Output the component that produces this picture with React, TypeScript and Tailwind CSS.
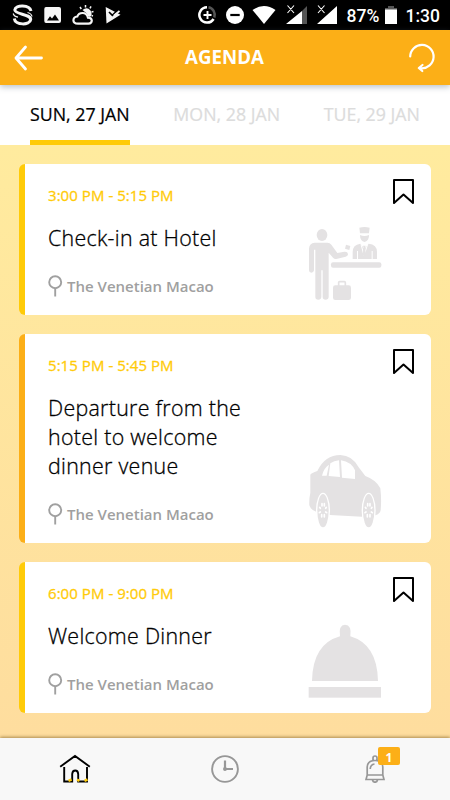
import type { ReactNode } from 'react';

interface AgendaItem {
  time: string;
  title: string;
  location: string;
  accent: string;
  art: ReactNode;
}

const TABS = ['SUN, 27 JAN', 'MON, 28 JAN', 'TUE, 29 JAN'];

function ReceptionArt() {
  return (
    <svg width="74" height="74" viewBox="54 33 222 222" fill="#e4e2e3">
      {/* Guest */}
      <ellipse cx="96" cy="60" rx="16" ry="18" />
      <path d="M74 83H112Q120 83 124 89L142 114L163 110Q173 109 174 117Q174 123 167 125L139 132Q133 133 129 128L116 113V246Q115 254 107 254Q98 254 98 246V166H94V246Q93 254 85 254Q76 254 76 246V104H72V166Q71 173 64 173Q57 173 57 166V101Q58 84 74 83Z" />
      <path d="M168 89L181 93L178 105L165 101Z" />
      {/* Receptionist */}
      <path d="M208 38Q223 34 239 38L237 55H210Z" />
      <path d="M210 60Q223 66 237 60Q238 76 224 81Q210 78 210 60Z" />
      <path d="M188 132V111Q188 89 211 86L223 101L236 86Q261 88 261 111V132H248V108H245V132H204V108H201V132Z" />
      <path d="M213 88L222 121L233 88" stroke="#fff" strokeWidth="3" fill="none" />
      <path d="M219 92H227L225 98L228 118L223 127L218 118L221 98Z" />
      <rect x="123" y="142" width="151" height="16" rx="6" />
      {/* Suitcase */}
      <rect x="129" y="211" width="54" height="44" rx="7" />
      <path d="M146 213V202Q146 200 149 200H163Q166 200 166 203V213" stroke="#e4e2e3" strokeWidth="5" fill="none" />
    </svg>
  );
}

function Wheel({ cx }: { cx: number }) {
  return (
    <g>
      <ellipse cx={cx} cy="212" rx="21" ry="54" fill="#fff" />
      <ellipse cx={cx} cy="212" rx="17" ry="50" />
      <g stroke="#fff" strokeWidth="5" strokeLinecap="round">
        <path d={`M${cx - 3} 191v7M${cx + 4} 191v7M${cx - 10} 202l2 3M${cx + 10} 202l-2 3`} />
        <path d={`M${cx - 11} 218l3-2M${cx + 11} 218l-3-2M${cx - 4} 231v-7M${cx + 4} 231v-7`} />
      </g>
    </g>
  );
}

function CarArt() {
  return (
    <svg width="74" height="74" viewBox="54 42 222 222" fill="#e4e2e3">
      <path d="M61 104Q64 99 82 93Q105 45 151 45Q187 46 206 82L226 108Q259 120 271 145Q275 179 272 211Q270 222 256 226L216 230L120 225L80 216Q63 211 58 196Q57 176 61 158Z" />
      <path d="M96 107Q101 84 117 74L110 107ZM121 70Q132 62 147 61L150 111L116 108ZM153 61Q184 66 195 91V117L156 113Z" fill="#fff" />
      <Wheel cx={99} />
      <Wheel cx={236} />
    </svg>
  );
}

function DinnerArt() {
  return (
    <svg width="74" height="74" viewBox="54 42 222 222" fill="#e4e2e3">
      <path d="M66 213Q68 102 150 79Q145 45 165 44Q186 45 181 79Q262 103 264 213Z" />
      <rect x="56" y="231" width="217" height="32" />
    </svg>
  );
}

const ITEMS: AgendaItem[] = [
  {
    time: '3:00 PM - 5:15 PM',
    title: 'Check-in at Hotel',
    location: 'The Venetian Macao',
    accent: 'border-[#ffcb08]',
    art: <ReceptionArt />,
  },
  {
    time: '5:15 PM - 5:45 PM',
    title: 'Departure from the hotel to welcome dinner venue',
    location: 'The Venetian Macao',
    accent: 'border-[#fcaf17]',
    art: <CarArt />,
  },
  {
    time: '6:00 PM - 9:00 PM',
    title: 'Welcome Dinner',
    location: 'The Venetian Macao',
    accent: 'border-[#ffcb08]',
    art: <DinnerArt />,
  },
];

function StatusBar() {
  return (
    <div className="flex h-[30px] items-center justify-between bg-black pr-[10px] pl-3 font-[Roboto,sans-serif] text-white">
      <svg width="112" height="30" viewBox="0 0 112 30" fill="none">
        <path d="M19 11C17.500 4.500 3.500 4.500 2.800 10C3 14.500 19 14 18.700 19.500C18 25.500 3 25.500 2.300 18.500" stroke="#f5f5f5" strokeWidth="3" />
        <path d="M1.200 13.500Q2 16.500 6 17.200M20 16.500Q19.500 13.500 15.500 12.500" stroke="#f5f5f5" strokeWidth="1.200" />
        <path fill="#f5f5f5" fillRule="evenodd" d="M34 7H47Q49 7 49 9V21Q49 23 47 23H34Q32.300 23 32.300 21V9Q32.300 7 34 7ZM35 20.500H47L43 14.500L40 18.500L38 16.300Z" />
        <path d="M66 23.700H76.500Q79.700 23.500 79.800 20.500Q79.500 17.700 76 17.700Q75 13 70.500 13Q66.500 13 65.300 16.500Q61.500 17 61.400 20.300Q61.500 23.700 66 23.700Z" stroke="#f5f5f5" strokeWidth="2.200" />
        <path d="M70.500 10Q75 6.500 78.500 10.500Q81 14.500 78 17L76 16Q74 12 70.500 10Z" fill="#f5f5f5" />
        <path d="M68 7l1.300 2M73.500 5v2.500M79 6.300l-1 2M81.500 11.500l-2 .5M81 16l-1.500-.5" stroke="#f5f5f5" strokeWidth="1.500" />
        <path fill="#f5f5f5" d="M93.700 7L108.500 14.800L94.500 23.500Z" />
        <path d="M97 12L100.300 15.300L106 9.800" stroke="#000" strokeWidth="1.700" />
        <path d="M102 15.500L107.500 11" stroke="#f5f5f5" strokeWidth="1.800" />
      </svg>
      <div className="flex items-center">
        <svg width="142" height="30" viewBox="197 0 142 30" fill="none">
          <path d="M207 7.200A7.700 7.700 0 1 0 213.600 19" stroke="#fff" strokeWidth="2.500" />
          <path d="M208.500 7.300A7.700 7.700 0 0 1 214.300 17.500" stroke="#555" strokeWidth="2.500" />
          <path d="M207.500 11V19M203.500 15H211.500" stroke="#fff" strokeWidth="1.900" />
          <circle cx="235" cy="15" r="9" fill="#fff" />
          <path d="M230.300 15H239.700" stroke="#000" strokeWidth="2.200" />
          <path d="M252.500 10Q264 2 275.500 10L264 24Z" fill="#fff" />
          <path d="M307 6V24H302V11Z" fill="#555" />
          <path d="M302 11V24H286ZM337 6V24H317Z" fill="#fff" />
          <path d="M287.500 5.500L294 13M294 5.500L287.500 13M318 5.500L324.500 13M324.500 5.500L318 13" stroke="#fff" strokeWidth="1.100" />
        </svg>
        <span className="ml-2 w-[38px] pt-px text-[17.500px] leading-[30px] font-medium">87%</span>
        <svg width="12" height="30" viewBox="0 0 12 30">
          <path d="M3 6H9V8H12V10H0V8H3Z" fill="#555" />
          <rect y="9.500" width="12" height="14.500" fill="#fff" />
        </svg>
        <span className="ml-[9px] pt-px text-[17.500px] leading-[30px] font-medium">1:30</span>
      </div>
    </div>
  );
}

function Header() {
  return (
    <header className="z-10 grid h-[55px] grid-cols-[1fr_auto_1fr] items-center bg-[#fcaf17] pr-[15px] pl-[14px] text-white shadow-[0_2px_6px_rgba(80,100,120,0.4)]">
      <svg width="29" height="28" viewBox="0 0 29 28" fill="none" stroke="currentColor" strokeWidth="2.800" strokeLinecap="round" strokeLinejoin="round">
        <path d="M11.500 3L2 14L11.500 25M2 14H27.500" />
      </svg>
      <h1 className="-mt-[2px] text-[18.700px] leading-6 font-bold">AGENDA</h1>
      <svg className="justify-self-end" width="27" height="30" viewBox="0 0 27 30" fill="none" stroke="currentColor" strokeWidth="2.200" strokeLinecap="round" strokeLinejoin="round">
        <path d="M2.200 13.500A11.700 11.700 0 1 1 13 25.300L11 25M14.500 22L10.800 25L14.300 28" />
      </svg>
    </header>
  );
}

function AgendaCard({ item }: { item: AgendaItem }) {
  return (
    <article className={`flex justify-between rounded-[6px] border-l-[6px] bg-white pl-[23px] ${item.accent}`}>
      <div className="w-[225px] pt-[21px] pb-[18px]">
        <p className="text-[15px] leading-5 font-medium tracking-[0.050px] text-[#ffcb08] [-webkit-text-stroke:0.300px_currentColor]">
          {item.time}
        </p>
        <h2 className="mt-[18px] text-[21.400px] leading-[29px] font-light tracking-[0.290px] text-black [-webkit-text-stroke:0.300px_currentColor]">
          {item.title}
        </h2>
        <p className="mt-[23px] flex items-center gap-1 text-[15px] leading-[22px] font-semibold whitespace-nowrap text-[#a0a0a0]">
          <svg width="15" height="22" viewBox="0 0 15 22" fill="none" stroke="currentColor" strokeWidth="1.900">
            <circle cx="7.200" cy="7.200" r="6" />
            <path d="M7.200 13.500V21.500" />
          </svg>
          {item.location}
        </p>
      </div>
      <div className="flex flex-col items-end justify-between pt-[15px] pr-[17px] pb-[15px]">
        <svg width="21" height="25" viewBox="0 0 21 25" fill="none" stroke="#000" strokeWidth="2" strokeLinejoin="round">
          <path d="M1 1H20V24L10.500 15.500L1 24Z" />
        </svg>
        <div className="mr-[32px]">{item.art}</div>
      </div>
    </article>
  );
}

function BottomNav() {
  return (
    <nav className="z-10 grid h-[62px] grid-cols-3 place-items-center bg-[#f8f8f8] shadow-[0_-1px_3px_rgba(90,60,0,0.5)]">
      <svg width="32" height="30" viewBox="0 0 32 30" fill="none" stroke="#000" strokeWidth="1.900">
        <path d="M1.200 12.700L16 2L30.800 12.700M5.200 13V27.500H13.200V20Q13.500 16.500 16.200 16.500Q19 16.500 19.200 20V27.500H28V13" />
        <path d="M9.500 26.800L12.500 25.500M18 25.500L20.500 26.800M25.500 26.800L28.500 25.500" stroke="#ffcb08" strokeWidth="2.500" />
      </svg>
      <svg width="28" height="28" viewBox="0 0 28 28" fill="none" stroke="#979797" strokeWidth="1.900">
        <circle cx="14" cy="14" r="12.900" />
        <path d="M14 5.500V14H22" strokeWidth="2.200" />
        <circle cx="14" cy="14" r="1" />
      </svg>
      <div className="relative">
        <svg width="20" height="28" viewBox="0 0 20 28" fill="none" stroke="#979797" strokeWidth="1.700">
          <path d="M8 6V3Q8 1 10 1Q12 1 12 3V6M2.200 20V12Q2.500 5.500 10 5.500Q17.500 5.500 17.800 12V20L19 24.500H1L2.200 20H17.800M5.200 14Q5.500 9.500 9.500 9M7.500 25Q8 27.200 10 27.200Q12 27.200 12.500 25" />
        </svg>
        <span className="absolute -top-2 left-[13px] flex h-[18px] w-[22px] items-center justify-center rounded-[2px] bg-[#fcaf17] pt-[3px] text-[12px] leading-none font-bold text-white">
          1
        </span>
      </div>
    </nav>
  );
}

export default function App() {
  return (
    <div className="flex h-[800px] w-[450px] flex-col overflow-hidden bg-white font-['Open_Sans',sans-serif]">
      <StatusBar />
      <Header />
      <div className="flex h-[60px] justify-between bg-white px-[30px] text-[17.800px]">
        {TABS.map((tab, i) => (
          <button
            key={tab}
            className={`border-b-[5px] pt-[4px] font-normal whitespace-nowrap [-webkit-text-stroke:0.200px_currentColor] ${
              i === 0 ? 'border-[#ffcb08] text-black' : 'border-transparent text-[#dcdcdc]'
            }`}
          >
            {tab}
          </button>
        ))}
      </div>
      <main className="flex flex-1 flex-col gap-[18.750px] bg-linear-to-b from-[#ffeb9e] to-[#fedd9e] px-[19px] pt-[19px]">
        {ITEMS.map((item) => (
          <AgendaCard key={item.time} item={item} />
        ))}
      </main>
      <BottomNav />
    </div>
  );
}
